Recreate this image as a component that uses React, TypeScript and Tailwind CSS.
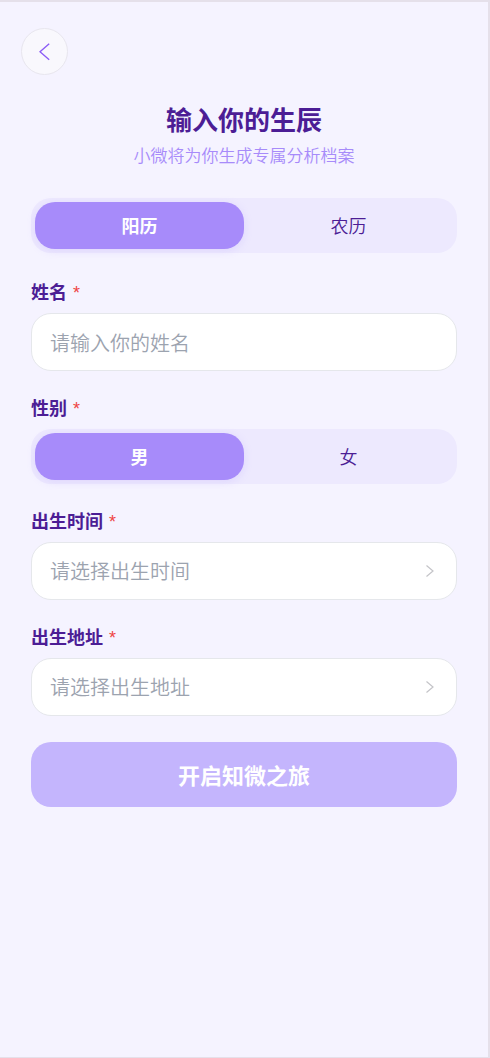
import { useState, type ReactNode } from "react";

type ToggleProps = {
  label: string;
  options: [string, string];
  value: string;
  onChange: (value: string) => void;
};

function Toggle({ label, options, value, onChange }: ToggleProps) {
  return (
    <div role="group" aria-label={label} className="grid grid-cols-2 rounded-[20px] bg-[#ede9fe] p-1">
      {options.map((option) => (
        <button
          key={option}
          type="button"
          aria-pressed={option === value}
          onClick={() => onChange(option)}
          className={
            option === value
              ? "h-[47px] rounded-[20px] bg-[#a78bfa] text-[18px] font-bold text-white shadow-[0_2px_8px_rgba(167,139,250,0.2)]"
              : "h-[47px] rounded-[20px] text-[18px] font-[350] text-[#4c1d95]"
          }
        >
          {option}
        </button>
      ))}
    </div>
  );
}

function LabelText({ children }: { children: ReactNode }) {
  return (
    <>
      {children} <span className="ml-0.5 font-['Liberation_Sans',sans-serif] font-normal text-[#ef4444]">*</span>
    </>
  );
}

const labelClass = "mb-2 block h-[27px] text-[18px] leading-[27px] font-bold text-[#4c1d95]";

function Picker({ id, label, placeholder }: { id: string; label: string; placeholder: string }) {
  return (
    <div>
      <label htmlFor={id} className={labelClass}>
        <LabelText>{label}</LabelText>
      </label>
      <button
        id={id}
        type="button"
        className="flex h-[58px] w-full items-center justify-between rounded-[20px] border border-[#e5e7eb] bg-white pr-[22px] pl-[18px] text-[20px] font-[350] text-[#9ca3af]"
      >
        {placeholder}
        <svg aria-hidden="true" viewBox="0 0 8 12" className="h-3 w-2" fill="none" stroke="#c4c4c8" strokeWidth="1.2">
          <path d="M0.5 0.5 7 6 0.5 11.5" />
        </svg>
      </button>
    </div>
  );
}

export default function App() {
  const [calendar, setCalendar] = useState("阳历");
  const [gender, setGender] = useState("男");
  const [name, setName] = useState("");

  return (
    <main className="min-h-screen border-t-2 border-r-2 border-b border-[#e5e0ea] bg-[#f5f3ff] font-['Noto_Sans_CJK_SC',sans-serif]">
      <header className="px-[21px] pt-[26px]">
        <button
          type="button"
          aria-label="返回"
          className="flex size-[47px] items-center justify-center rounded-full border border-[#e8e6ee] bg-[#f9f8fd]"
        >
          <svg aria-hidden="true" viewBox="0 0 12 18" className="h-[18px] w-3" fill="none" stroke="#8b5cf6" strokeWidth="1.4">
            <path d="M10.2 0.7 1 8.7l9.2 8" />
          </svg>
        </button>
      </header>

      <div className="px-[31px] pt-6">
        <div className="mb-[30px] text-center">
          <h1 className="text-[26px] leading-[39px] font-bold text-[#4c1d95]">输入你的生辰</h1>
          <p className="mt-1 text-[17px] leading-[26px] font-[350] text-[#a78bfa]">小微将为你生成专属分析档案</p>
        </div>

        <form onSubmit={(event) => event.preventDefault()}>
          <Toggle label="历法" options={["阳历", "农历"]} value={calendar} onChange={setCalendar} />

          <div className="mt-[25px] flex flex-col gap-[23px]">
            <div>
              <label htmlFor="name" className={labelClass}>
                <LabelText>姓名</LabelText>
              </label>
              <input
                id="name"
                value={name}
                onChange={(event) => setName(event.target.value)}
                placeholder="请输入你的姓名"
                className="h-[58px] w-full rounded-[20px] border border-[#e5e7eb] bg-white px-[18px] text-[20px] font-[350] text-[#4c1d95] placeholder:text-[#9ca3af]"
              />
            </div>

            <div>
              <div className={labelClass}>
                <LabelText>性别</LabelText>
              </div>
              <Toggle label="性别" options={["男", "女"]} value={gender} onChange={setGender} />
            </div>

            <Picker id="birth-time" label="出生时间" placeholder="请选择出生时间" />
            <Picker id="birth-place" label="出生地址" placeholder="请选择出生地址" />
          </div>

          <button type="submit" className="mt-[26px] h-[65px] w-full rounded-[20px] bg-[#c4b5fd] text-[22px] font-bold text-white">
            开启知微之旅
          </button>
        </form>
      </div>
    </main>
  );
}
